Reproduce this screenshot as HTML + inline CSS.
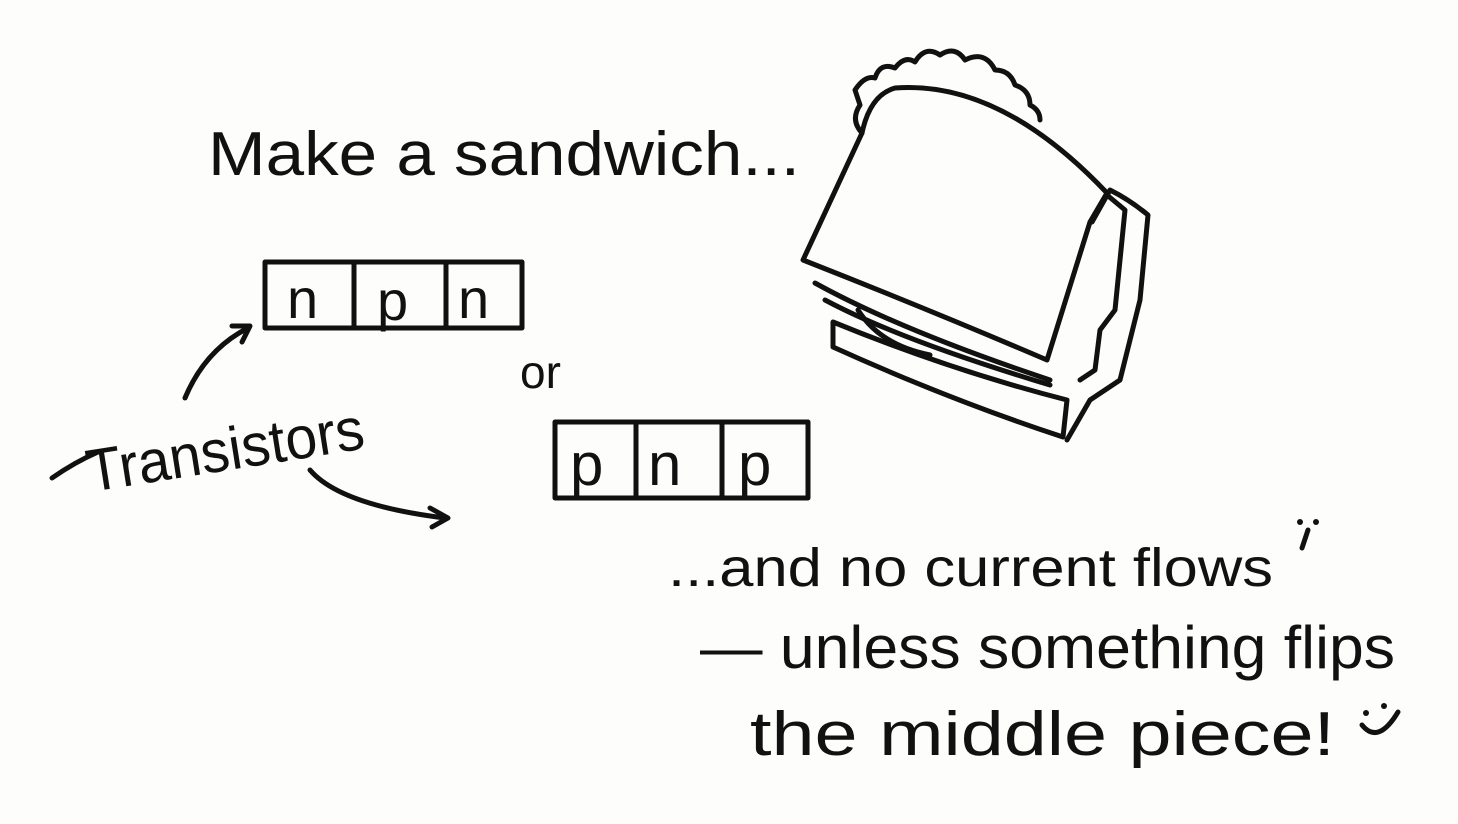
<!DOCTYPE html>
<html><head><meta charset="utf-8"><style>
html,body{margin:0;padding:0;background:#fdfdfc}
svg{display:block}
text{font-family:"Liberation Sans",sans-serif;fill:#111}
</style></head><body>
<svg width="1458" height="824" viewBox="0 0 1458 824" xmlns="http://www.w3.org/2000/svg">
<rect width="1458" height="824" fill="#fdfdfc"/>
<g fill="none" stroke="#111" stroke-width="5" stroke-linecap="round" stroke-linejoin="round">
<rect x="265" y="262" width="257" height="66"/>
<line x1="354" y1="262" x2="354" y2="328"/><line x1="446" y1="262" x2="446" y2="328"/>
<rect x="555" y="422" width="253" height="76"/>
<line x1="636" y1="422" x2="636" y2="498"/><line x1="722" y1="422" x2="722" y2="498"/>
<path d="M185 398 Q205 350 248 328"/><path d="M232 326 L250 326 L242 342"/>
<path d="M310 470 Q340 505 445 518"/><path d="M430 508 L448 518 L432 527"/>
<path d="M52 478 Q75 462 98 452"/>
<path d="M803 260 L862 133 Q870 95 895 88 Q1000 80 1107 193 L1090 222 L1047 360 Q930 310 803 260 Z"/>
<path d="M862 133 Q850 120 860 105 L855 90 Q865 75 875 78 Q880 62 895 68 Q905 55 915 62 Q925 45 940 55 Q955 45 965 60 Q985 50 995 70 Q1010 70 1015 85 Q1030 90 1030 105 Q1040 110 1040 120"/>
<path d="M1092 222 L1110 190 Q1130 200 1148 215 L1140 300 L1120 380 L1090 400 L1067 440"/>
<path d="M1107 195 L1125 210 L1115 310 L1100 330 L1095 370 L1080 380"/>
<path d="M815 283 Q900 330 1050 380"/>
<path d="M825 300 Q900 340 1050 385"/>
<path d="M833 322 L833 347 Q950 400 1063 437 L1067 400 Q950 370 833 322"/>
<path d="M858 310 Q880 345 930 355"/>
<path d="M1362 725 Q1378 745 1398 712"/>
<path d="M1308 530 L1302 548"/>
</g>
<circle cx="1366" cy="713" r="3" fill="#111"/><circle cx="1384" cy="706" r="3" fill="#111"/>
<circle cx="1300" cy="522" r="3" fill="#111"/><circle cx="1316" cy="522" r="3" fill="#111"/>
<text x="208" y="175" font-size="62" textLength="592" lengthAdjust="spacingAndGlyphs">Make a sandwich...</text>
<text x="287" y="318" font-size="56">n</text>
<text x="377" y="320" font-size="56">p</text>
<text x="458" y="318" font-size="56">n</text>
<text x="520" y="388" font-size="46">or</text>
<text x="570" y="485" font-size="60">p</text>
<text x="648" y="485" font-size="60">n</text>
<text x="738" y="485" font-size="60">p</text>
<text x="90" y="492" font-size="60" transform="rotate(-9 90 492)" textLength="280" lengthAdjust="spacingAndGlyphs">Transistors</text>
<text x="668" y="586" font-size="54" textLength="605" lengthAdjust="spacingAndGlyphs">...and no current flows</text>
<text x="700" y="668" font-size="60" textLength="695" lengthAdjust="spacingAndGlyphs">— unless something flips</text>
<text x="750" y="755" font-size="62" textLength="585" lengthAdjust="spacingAndGlyphs">the middle piece!</text>
</svg>
</body></html>
